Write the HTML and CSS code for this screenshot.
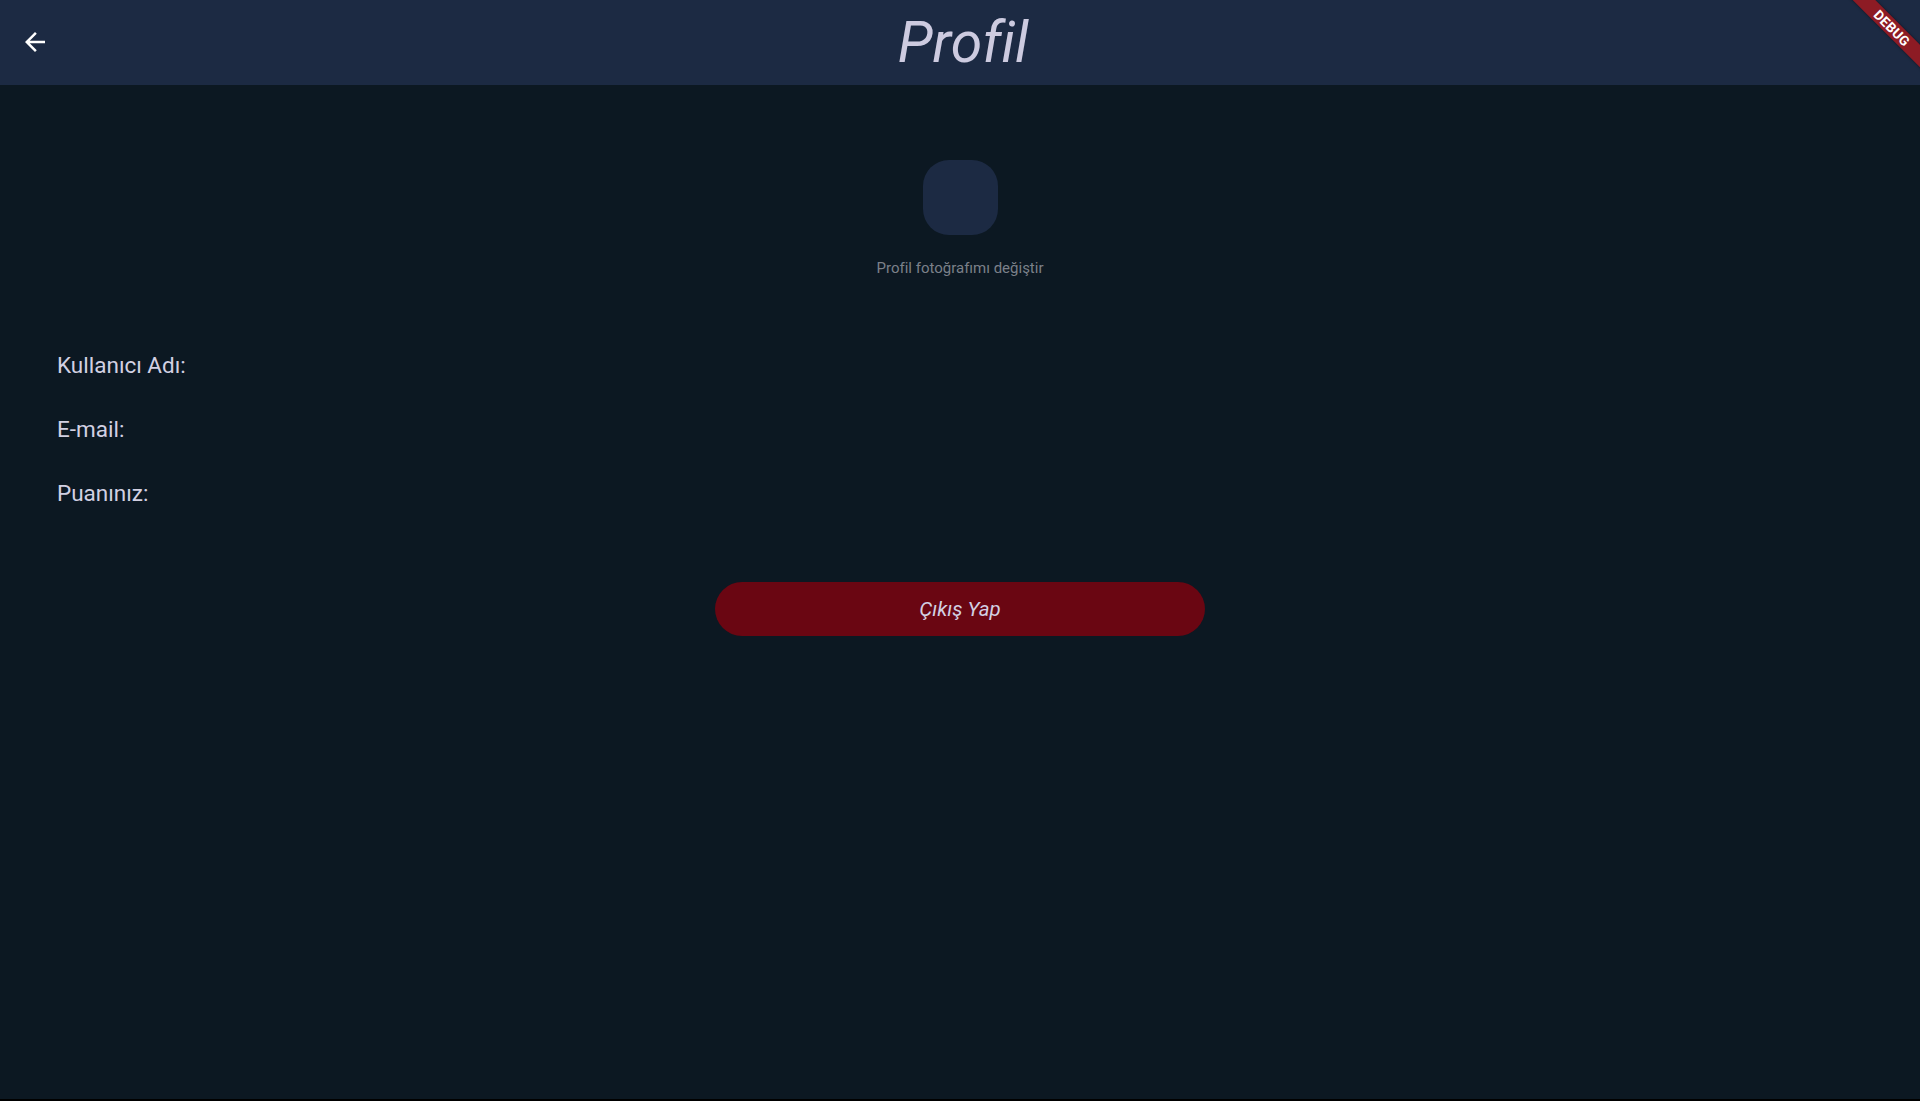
FILE: index.html
```html
<!DOCTYPE html>
<html lang="tr">
<head>
<meta charset="utf-8">
<title>Profil</title>
<link rel="stylesheet" href="styles.css">
</head>
<body>
<div class="app">
  <header class="appbar">
    <button class="back" aria-label="Geri">
      <svg viewBox="0 0 24 24" width="30" height="30"><path fill="#ffffff" d="M20 11H7.83l5.59-5.59L12 4l-8 8 8 8 1.41-1.41L7.83 13H20v-2z"/></svg>
    </button>
    <h1 class="title">Profil</h1>
  </header>
  <main class="content">
    <section class="photo">
      <div class="avatar"></div>
      <div class="caption">Profil fotoğrafımı değiştir</div>
    </section>
    <section class="info">
      <div class="row">Kullanıcı Adı:</div>
      <div class="row">E-mail:</div>
      <div class="row">Puanınız:</div>
    </section>
    <div class="actions">
      <button class="logout">Çıkış Yap</button>
    </div>
  </main>
  <div class="banner"><span>DEBUG</span></div>
</div>
</body>
</html>
```

FILE: styles.css
```css
html, body {
  margin: 0;
  padding: 0;
  height: 100%;
  background: #000;
}
body {
  font-family: Roboto, "Noto Sans", sans-serif;
}
.app {
  position: relative;
  width: 1920px;
  height: 1099px;
  overflow: hidden;
  background: #0c1822;
  display: flex;
  flex-direction: column;
}
.appbar {
  height: 85px;
  flex: none;
  background: #1c2a43;
  display: flex;
  align-items: center;
  justify-content: center;
  position: relative;
}
.back {
  position: absolute;
  left: 20px;
  top: 27px;
  width: 30px;
  height: 30px;
  padding: 0;
  border: 0;
  background: transparent;
  display: flex;
}
.title {
  margin: 0;
  font-size: 57px;
  font-weight: 400;
  font-style: italic;
  color: #cdcbe0;
  line-height: 67px;
  padding-left: 6px;
}
.content {
  flex: 1;
  display: flex;
  flex-direction: column;
}
.photo {
  display: flex;
  flex-direction: column;
  align-items: center;
  padding-top: 75px;
}
.avatar {
  width: 75px;
  height: 75px;
  border-radius: 26px;
  background: #1c2a43;
}
.caption {
  margin-top: 24px;
  font-size: 15px;
  line-height: 18px;
  color: #7b8089;
}
.info {
  display: flex;
  flex-direction: column;
  gap: 38px;
  padding: 75px 0 0 57px;
}
.row {
  font-size: 22.5px;
  line-height: 26px;
  color: #d2d0e2;
}
.actions {
  display: flex;
  justify-content: center;
  padding-top: 76px;
}
.logout {
  width: 490px;
  height: 54px;
  border: 0;
  border-radius: 27px;
  background: #6a0612;
  color: #d2d0e2;
  font-family: Roboto, sans-serif;
  font-size: 20.5px;
  font-style: italic;
  padding: 0;
}
.banner {
  position: absolute;
  left: 1822px;
  top: 20px;
  width: 140px;
  height: 16px;
  transform: rotate(45deg);
  background: #8d1b24;
  box-shadow: 0 0 3px rgba(0,0,0,0.5);
  display: flex;
  align-items: center;
  justify-content: center;
}
.banner span {
  color: #fff;
  font-size: 13.5px;
  font-weight: 700;
  line-height: 16px;
  letter-spacing: 0.3px;
}
```
